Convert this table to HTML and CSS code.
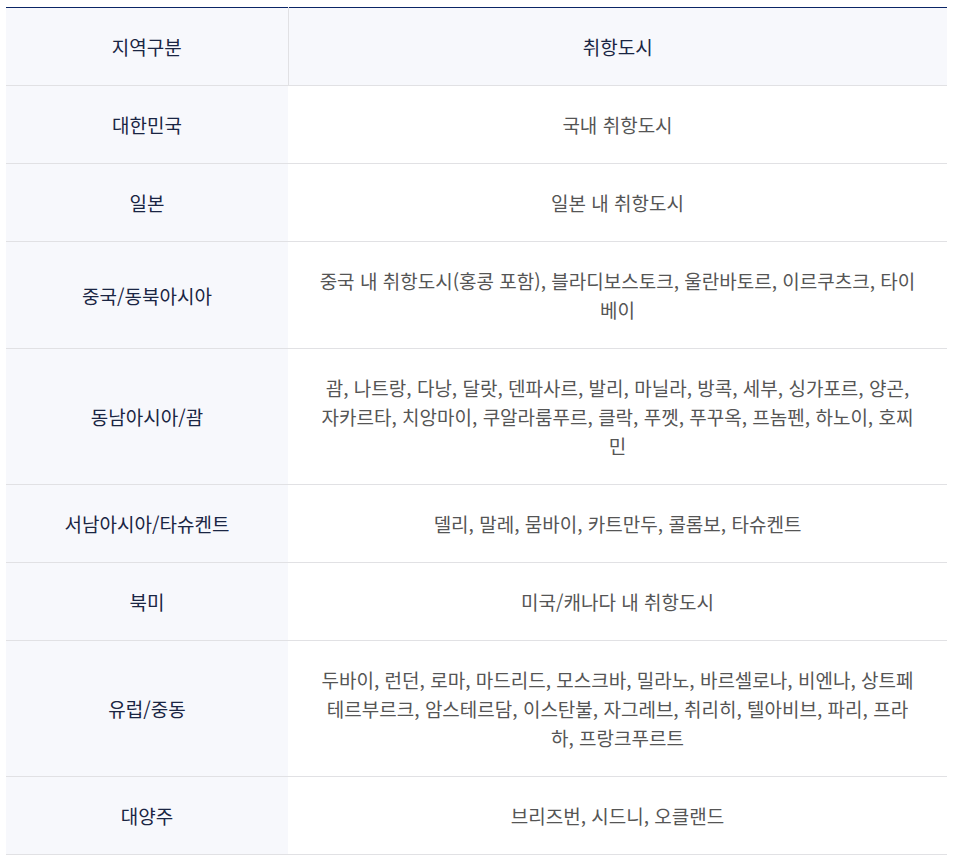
FILE: index.html
```html
<!DOCTYPE html>
<html lang="ko">
<head>
    <meta charset="UTF-8">
    <meta name="viewport" content="width=device-width, initial-scale=1.0">
    <title>취항도시</title>
    <link rel="stylesheet" href="styles.css">
</head>
<body>

<table class="tbl">
    <colgroup>
        <col class="col-area">
        <col>
    </colgroup>
    <thead>
    <tr>
        <th>지역구분</th>
        <th>취항도시</th>
    </tr>
    </thead>
    <tbody>
    <tr>
        <th>대한민국</th>
        <td>국내 취항도시</td>
    </tr>
    <tr>
        <th>일본</th>
        <td>일본 내 취항도시</td>
    </tr>
    <tr>
        <th>중국/동북아시아</th>
        <td>중국 내 취항도시(홍콩 포함), 블라디보스토크, 울란바토르, 이르쿠츠크, 타이베이</td>
    </tr>
    <tr>
        <th>동남아시아/괌</th>
        <td>괌, 나트랑, 다낭, 달랏, 덴파사르, 발리, 마닐라, 방콕, 세부, 싱가포르, 양곤, 자카르타, 치앙마이, 쿠알라룸푸르, 클락, 푸껫, 푸꾸옥, 프놈펜, 하노이, 호찌민</td>
    </tr>
    <tr>
        <th>서남아시아/타슈켄트</th>
        <td>델리, 말레, 뭄바이, 카트만두, 콜롬보, 타슈켄트</td>
    </tr>
    <tr>
        <th>북미</th>
        <td>미국/캐나다 내 취항도시</td>
    </tr>
    <tr>
        <th>유럽/중동</th>
        <td>두바이, 런던, 로마, 마드리드, 모스크바, 밀라노, 바르셀로나, 비엔나, 상트페테르부르크, 암스테르담, 이스탄불, 자그레브, 취리히, 텔아비브, 파리, 프라하, 프랑크푸르트</td>
    </tr>
    <tr>
        <th>대양주</th>
        <td>브리즈번, 시드니, 오클랜드</td>
    </tr>
    </tbody>
</table>

</body>
</html>
```

FILE: styles.css
```css
body {
    margin: 0;
    padding: 7px 14px 0 6px;
    background-color: #fff;
    font-family: "Noto Sans CJK KR", "Noto Sans", sans-serif;
}
.tbl {
    width: 941px;
    border-collapse: collapse;
    border-top: 1px solid #0a2566;
    font-size: 19px;
    line-height: 29px;
}
.col-area {
    width: 282px;
}
.tbl th,
.tbl td {
    padding: 24px 30px;
    text-align: center;
    vertical-align: middle;
    border-bottom: 1px solid #e1e1e4;
}
.tbl thead th {
    background-color: #f7f8fc;
    color: #1a2543;
    font-weight: 400;
}
.tbl thead th + th {
    border-left: 1px solid #e1e1e4;
}
.tbl tbody th {
    background-color: #f7f8fc;
    color: #1a2543;
    font-weight: 400;
}
.tbl tbody td {
    color: #555;
}
```
